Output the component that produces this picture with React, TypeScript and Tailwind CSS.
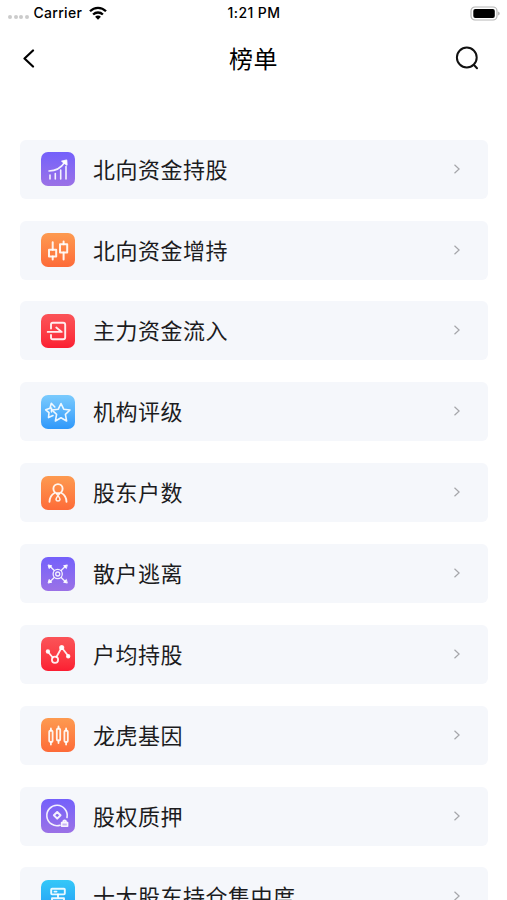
import type { ReactNode } from 'react';

interface RankItem {
  title: string;
  color: string;
  icon: ReactNode;
}

const purple = 'from-[#7460fb] to-[#9b71e6]';
const orange = 'from-[#fd9a50] to-[#fd6a38]';
const red = 'from-[#fb5358] to-[#fb1d32]';
const blue = 'from-[#7acbfd] to-[#2e98fa]';
const cyan = 'from-[#35c8f8] to-[#2799f5]';

const items: RankItem[] = [
  {
    title: '北向资金持股',
    color: purple,
    icon: (
      <>
        <path d="M8 19c6 0 12-3 16-9" />
        <path d="M21 9.2l4.5-.8.3 4.500z" fill="white" />
        <path d="M9 23v4M14.300 21.500V27M19.700 18v9M25 14.500V27" />
      </>
    ),
  },
  {
    title: '北向资金增持',
    color: orange,
    icon: (
      <g strokeWidth="2">
        <path d="M8 16.800h7.200v6.800H8zM19 11.200h7.200v8.300H19z" />
        <path d="M11.700 9.300v7.500M11.700 23.600V26.500M22.600 8.500v2.700M22.600 19.500v7" />
      </g>
    ),
  },
  {
    title: '主力资金流入',
    color: red,
    icon: (
      <g strokeWidth="1.900">
        <path d="M10 14.500v-4a1.800 1.800 0 0 1 1.800-1.800h10.400a2 2 0 0 1 2 2v12.600a2 2 0 0 1-2 2H11.800a1.800 1.800 0 0 1-1.800-1.800V21" />
        <path d="M6.700 17.900h14l-5.400-4.400" />
      </g>
    ),
  },
  {
    title: '机构评级',
    color: blue,
    icon: (
      <>
        <path d="M20 8.500l2.700 5.700 6.300.8-4.600 4.400 1.200 6.600-5.600-3.200-5.600 3.200 1.200-6.600-4.600-4.400 6.300-.8z" />
        <path d="M13.800 12L10.300 8.300l-1.300 4.900-4.300 1.600 3.300 2.900-.5 4.900 4.500-2M10.500 13v4" />
      </>
    ),
  },
  {
    title: '股东户数',
    color: orange,
    icon: (
      <g strokeWidth="1.900">
        <circle cx="17" cy="12.700" r="4.600" />
        <path d="M8.500 25.800c.2-4.600 2-7.200 5-8.800M25.500 25.800c-.2-4.600-2-7.200-5-8.800" />
        <path d="M15.300 17.500L17 19.600l1.700-2.100M17 19.600c-3 3.700-2.300 5.400 0 5.400s3-1.700 0-5.400z" strokeWidth="1.500" />
      </g>
    ),
  },
  {
    title: '散户逃离',
    color: purple,
    icon: (
      <>
        <circle cx="16.700" cy="17" r="4.600" strokeWidth="1.300" />
        <circle cx="16.700" cy="17" r="2" strokeWidth="1.300" />
        <path d="M13 13.300L9 9.300M20.400 13.300l4-4M13 20.700l-4 4M20.400 20.700l4 4" strokeWidth="1.300" />
        <path
          d="M7.500 8l3.300.8-2.500 2.500zM25.900 8l-3.300.8 2.500 2.500zM7.500 26l3.300-.8-2.500-2.500zM25.900 26l-3.300-.8 2.500-2.500z"
          fill="white"
          strokeWidth="1"
        />
      </>
    ),
  },
  {
    title: '户均持股',
    color: red,
    icon: (
      <g strokeWidth="1.800">
        <path d="M6.700 14.500l5 6M15.400 20l5.300-9.500 6.600 8.500" />
        <circle cx="14" cy="22.800" r="3.100" />
        <g fill="white">
          <circle cx="6.900" cy="14.500" r="1.300" />
          <circle cx="20.700" cy="10.500" r="1.700" />
          <circle cx="27.200" cy="19.200" r="1.300" />
        </g>
      </g>
    ),
  },
  {
    title: '龙虎基因',
    color: orange,
    icon: (
      <g strokeWidth="1.800">
        <rect x="8.200" y="12.500" width="3.400" height="11.500" rx="1.600" />
        <rect x="15.800" y="10.500" width="3.400" height="12" rx="1.600" />
        <rect x="23.400" y="12.500" width="3.400" height="11.500" rx="1.600" />
        <path d="M9.900 10.500v2M9.900 24v2.500M17.500 8.500v2M17.500 22.500V25M25.100 10.500v2M25.100 24v2.500" />
      </g>
    ),
  },
  {
    title: '股权质押',
    color: purple,
    icon: (
      <>
        <path d="M19 26.200A10.200 10.200 0 1 1 26 18.500" />
        <path d="M16.200 13l3.300 3.300-3.300 3.300-3.300-3.300z" strokeWidth="2" />
        <path d="M20.600 23.600h6v3.600h-6zM22 23.600c0-3 3.200-3 3.200 0" fill="white" fillOpacity="0.5" />
      </>
    ),
  },
  {
    title: '十大股东持仓集中度',
    color: cyan,
    icon: (
      <g strokeWidth="1.900">
        <rect x="10.200" y="8.800" width="13.600" height="5.600" rx="0.800" />
        <path d="M13.500 11.600h2M17 14.400V18M11 22v-3.800h12V22M8.800 22h5v4h-5zM20.200 22h5v4h-5z" />
      </g>
    ),
  },
];

function StatusBar() {
  return (
    <div className="flex h-[26px] shrink-0 items-center justify-between pl-2 pr-[7px] font-['Inter',sans-serif] text-[14px] font-medium">
      <div className="flex flex-1 items-center pb-px">
        <div className="mt-2 flex gap-[1.5px]">
          {[0, 1, 2, 3].map((dot) => (
            <span key={dot} className="size-1 rounded-full bg-[#cbcbcb]" />
          ))}
        </div>
        <span className="ml-[5px] tracking-[0.3px]">Carrier</span>
        <svg className="ml-[7px]" width="18" height="14" viewBox="0 0 18 14" fill="none" stroke="black" strokeWidth="2.300">
          <path d="M1 5.300C5.500.7 12.500.7 17 5.300M4.100 8.500c2.800-2.700 7-2.700 9.800 0" />
          <path d="M9 13.700l-2.900-3c1.600-1.500 4.200-1.500 5.800 0z" fill="black" stroke="none" />
        </svg>
      </div>
      <span className="pb-px tracking-[0.4px]">1:21 PM</span>
      <div className="flex flex-1 justify-end">
        <svg width="30" height="15" viewBox="0 0 30 15">
          <rect x="1" y="1" width="26" height="13" rx="4" fill="none" stroke="#b5b5b5" strokeWidth="1.200" />
          <rect x="3.300" y="3" width="21.500" height="9" rx="2" fill="black" />
          <path d="M28.300 5.500c1.700.8 1.700 3.200 0 4z" fill="#999" />
        </svg>
      </div>
    </div>
  );
}

function Header() {
  return (
    <header className="flex h-16 shrink-0 items-center pl-[22px] pr-[28px]">
      <svg width="25" height="20" viewBox="0 0 25 20" fill="none" stroke="black" strokeWidth="2.200" strokeLinecap="round" strokeLinejoin="round">
        <path d="M11 2.500l-8.500 8 8.500 8" />
      </svg>
      <h1 className="flex-1 pb-px pl-[6px] text-center text-[24px] leading-8 tracking-[0.5px]">榜单</h1>
      <svg width="25" height="25" viewBox="0 0 25 25" fill="none" stroke="#111" strokeWidth="2" strokeLinecap="round">
        <circle cx="12.800" cy="11.500" r="9.900" />
        <path d="M20 19l3 3.200" />
      </svg>
    </header>
  );
}

function RankRow({ title, color, icon }: RankItem) {
  return (
    <li className="flex h-[59px] shrink-0 items-center rounded-md bg-[#f5f7fb] pl-[21px] pr-[27px]">
      <div className={`size-[34px] shrink-0 rounded-[7px] bg-linear-to-b ${color}`}>
        <svg viewBox="0 0 34 34" fill="none" stroke="white" strokeOpacity="0.9" strokeWidth="1.600" strokeLinecap="round" strokeLinejoin="round">
          {icon}
        </svg>
      </div>
      <span className="ml-[18px] flex-1 pb-[3px] text-[22px] leading-8 tracking-[0.5px] text-[#1c1c1e]">{title}</span>
      <svg className="mb-px" width="8" height="12" viewBox="0 0 8 12" fill="none" stroke="#a5a6aa" strokeWidth="1.200">
        <path d="M1.500 1.700L6.100 6l-4.600 4.300" />
      </svg>
    </li>
  );
}

export default function App() {
  return (
    <div className="flex h-screen flex-col overflow-hidden bg-white font-['Noto_Sans_CJK_SC',sans-serif] text-black">
      <StatusBar />
      <Header />
      <ul className="mt-[49.8px] flex flex-col gap-[21.85px] pl-5 pr-[19px]">
        {items.map((item) => (
          <RankRow key={item.title} {...item} />
        ))}
      </ul>
    </div>
  );
}
